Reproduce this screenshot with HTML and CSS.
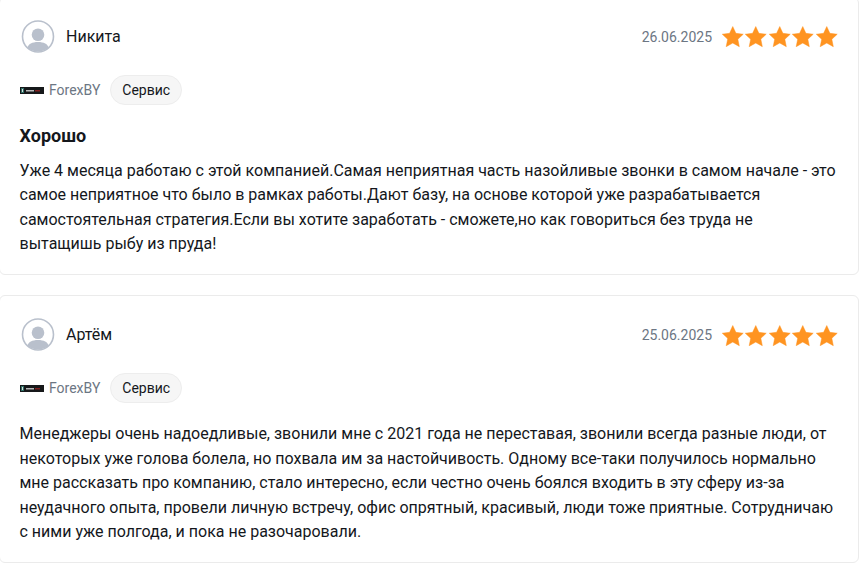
FILE: index.html
```html
<!DOCTYPE html>
<html lang="ru">
<head>
    <meta charset="UTF-8">
    <meta name="viewport" content="width=device-width, initial-scale=1.0">
    <title>Отзывы - ForexBY</title>
    <link rel="stylesheet" href="styles.css">
</head>
<body>
    <svg class="icon-defs" width="0" height="0">
        <defs>
            <symbol id="star" viewBox="0 0 24 24">
                <path d="M12 1.6l3.2 6.9 7.5.9-5.5 5.2 1.5 7.5L12 18.4l-6.7 3.7 1.5-7.500L1.300 9.400l7.500-.9z" stroke-linejoin="round"/>
            </symbol>
            <symbol id="avatar" viewBox="0 0 34 34">
                <circle cx="17" cy="17.500" r="15.500" fill="#fff" stroke="#b9c0cc" stroke-width="1.600"/>
                <circle cx="17" cy="15.800" r="6.300" fill="#b9c0cc"/>
                <path d="M6.200 29c1-4 5-6 10.800-6s9.800 2 10.800 6c-3 2.300-6.800 3.500-10.800 3.500s-7.800-1.200-10.800-3.500z" fill="#b9c0cc"/>
            </symbol>
            <symbol id="forex-logo" viewBox="0 0 24 7">
                <rect width="24" height="7" fill="#16181a"/>
                <rect x="1" y="1" width="3" height="5" fill="#2f6f66"/>
                <rect x="2" y="2" width="1" height="3" fill="#d9d9d9"/>
                <rect x="6" y="3" width="8" height="1.500" fill="#b8b8b8"/>
                <rect x="15" y="3" width="5" height="1.500" fill="#7d2020"/>
            </symbol>
        </defs>
    </svg>

    <div class="review-list">
        <div class="review-card">
            <div class="review-head">
                <div class="author">
                    <svg class="avatar"><use href="#avatar"/></svg>
                    <span class="author-name">Никита</span>
                </div>
                <div class="review-meta">
                    <span class="review-date">26.06.2025</span>
                    <div class="stars">
                        <svg class="star"><use href="#star"/></svg>
                        <svg class="star"><use href="#star"/></svg>
                        <svg class="star"><use href="#star"/></svg>
                        <svg class="star"><use href="#star"/></svg>
                        <svg class="star"><use href="#star"/></svg>
                    </div>
                </div>
            </div>
            <div class="review-tags">
                <svg class="company-logo"><use href="#forex-logo"/></svg>
                <span class="company-name">ForexBY</span>
                <span class="tag">Сервис</span>
            </div>
            <h3 class="review-title">Хорошо</h3>
            <p class="review-text">Уже 4 месяца работаю с этой компанией.Самая неприятная часть назойливые звонки в самом начале - это самое неприятное что было в рамках работы.Дают базу, на основе которой уже разрабатывается самостоятельная стратегия.Если вы хотите заработать - сможете,но как говориться без труда не вытащишь рыбу из пруда!</p>
        </div>

        <div class="review-card">
            <div class="review-head">
                <div class="author">
                    <svg class="avatar"><use href="#avatar"/></svg>
                    <span class="author-name">Артём</span>
                </div>
                <div class="review-meta">
                    <span class="review-date">25.06.2025</span>
                    <div class="stars">
                        <svg class="star"><use href="#star"/></svg>
                        <svg class="star"><use href="#star"/></svg>
                        <svg class="star"><use href="#star"/></svg>
                        <svg class="star"><use href="#star"/></svg>
                        <svg class="star"><use href="#star"/></svg>
                    </div>
                </div>
            </div>
            <div class="review-tags">
                <svg class="company-logo"><use href="#forex-logo"/></svg>
                <span class="company-name">ForexBY</span>
                <span class="tag">Сервис</span>
            </div>
            <p class="review-text">Менеджеры очень надоедливые, звонили мне с 2021 года не переставая, звонили всегда разные люди, от некоторых уже голова болела, но похвала им за настойчивость. Одному все-таки получилось нормально мне рассказать про компанию, стало интересно, если честно очень боялся входить в эту сферу из-за неудачного опыта, провели личную встречу, офис опрятный, красивый, люди тоже приятные. Сотрудничаю с ними уже полгода, и пока не разочаровали.</p>
        </div>
    </div>
</body>
</html>
```

FILE: styles.css
```css
body {
    font-family: 'Roboto', 'Liberation Sans', sans-serif;
    background-color: #ffffff;
    color: #14171c;
    margin: 0;
    overflow: hidden;
}
.icon-defs {
    display: block;
}
.review-list {
    display: flex;
    flex-direction: column;
    gap: 20px;
    width: 860px;
    margin: -3px 0 0 -1px;
}
.review-card {
    border: 1px solid #ebebeb;
    border-radius: 6px;
    padding: 21px 20px 17.8px 19.5px;
}
.review-head {
    display: flex;
    justify-content: space-between;
    align-items: center;
    height: 34px;
}
.author {
    display: flex;
    align-items: center;
    gap: 11px;
}
.avatar {
    width: 34px;
    height: 34px;
    margin-left: 1.5px;
}
.author-name {
    font-size: 16px;
}
.review-meta {
    display: flex;
    align-items: center;
    gap: 8.5px;
    margin-top: 2px;
}
.review-date {
    font-size: 14px;
    color: #6c7683;
}
.stars {
    display: flex;
}
.star {
    width: 23.5px;
    height: 23.5px;
    fill: #ff9421;
    stroke: #ff9421;
    stroke-width: 0.5;
}
.review-tags {
    display: flex;
    align-items: center;
    margin-top: 22px;
}
.company-logo {
    width: 24px;
    height: 7px;
    margin-left: 0.5px;
    margin-right: 5px;
}
.company-name {
    font-size: 14px;
    color: #6c7683;
}
.tag {
    margin-left: 10px;
    padding: 0 11px;
    height: 28px;
    line-height: 28px;
    font-size: 14px;
    background-color: #f6f6f6;
    border: 1px solid #ededed;
    border-radius: 16px;
}
.review-title {
    font-size: 18px;
    font-weight: 700;
    line-height: 24px;
    margin: 19px 0 0 0;
}
.review-text {
    font-size: 16px;
    line-height: 24.4px;
    margin: 11px 0 0 0;
}
.review-tags + .review-text {
    margin-top: 19px;
}
```
